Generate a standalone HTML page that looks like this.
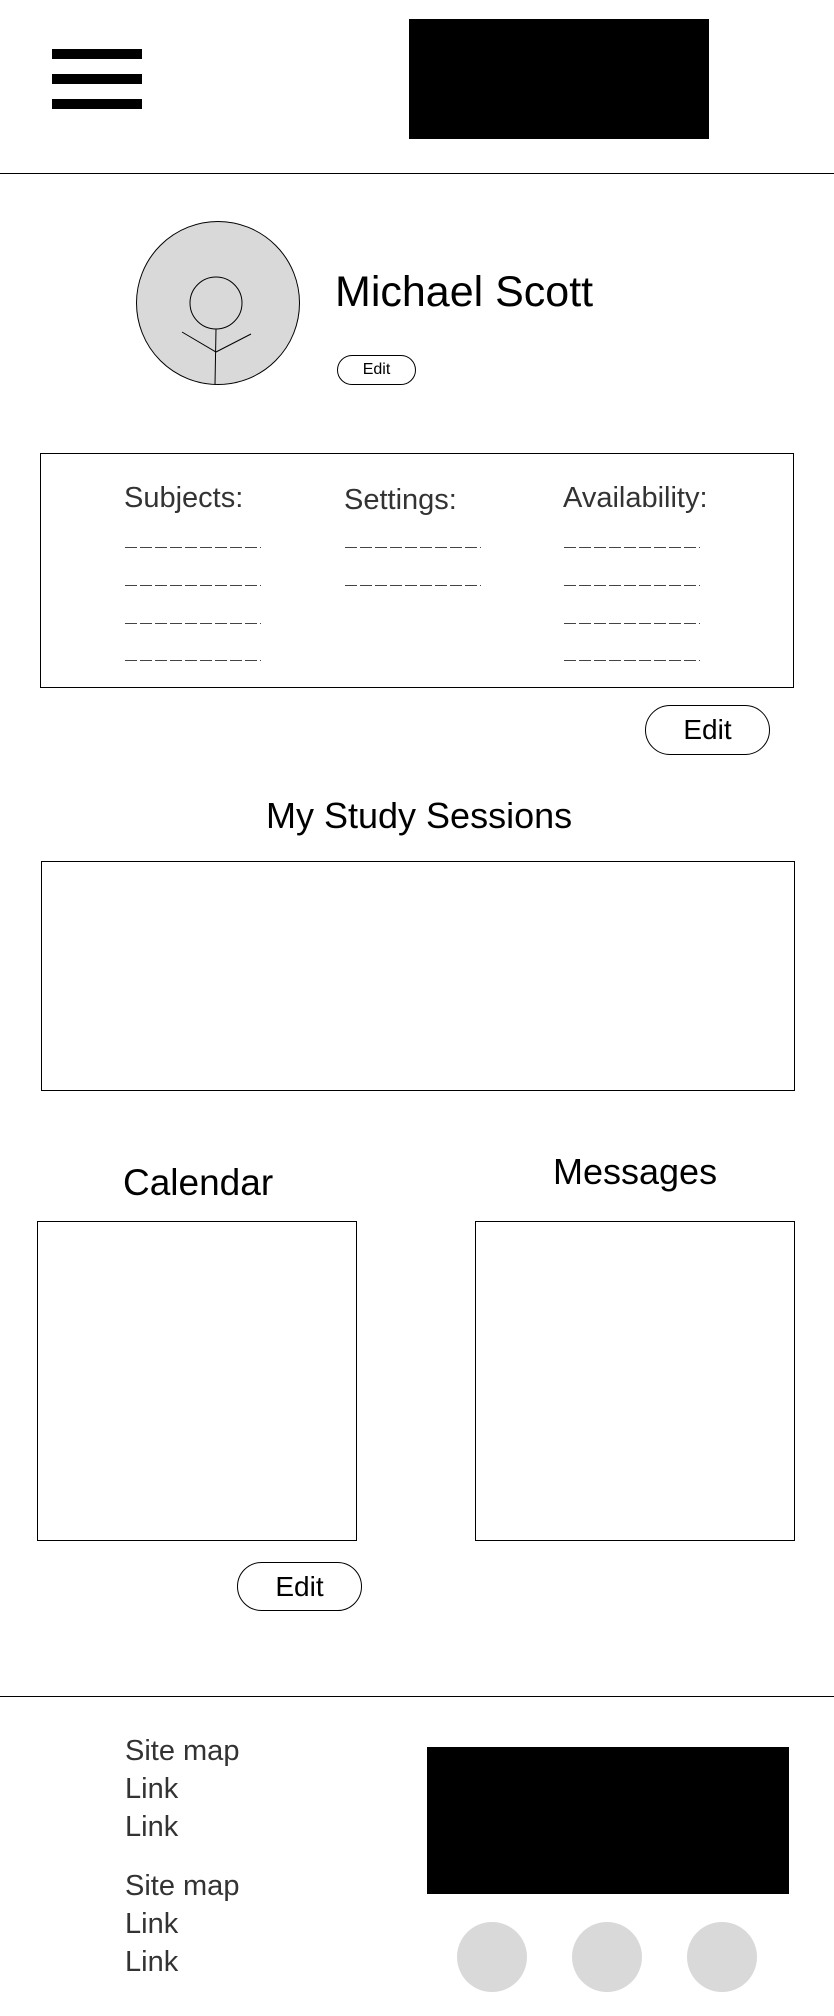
<!DOCTYPE html>
<html><head><meta charset="utf-8"><style>
*{margin:0;padding:0;box-sizing:border-box}
body{width:834px;height:2016px;position:relative;background:#fff;font-family:"Liberation Sans",sans-serif;color:#000;overflow:hidden}
.a{position:absolute}
.bar{position:absolute;left:52px;width:90px;height:10px;background:#000}
.box{position:absolute;border:1px solid #000}
.t{position:absolute;white-space:nowrap;line-height:1}
.btn{position:absolute;border:1px solid #000;border-radius:30px;display:flex;align-items:center;justify-content:center}
.lt{color:#333;font-weight:normal}
.d{position:absolute;width:136px;height:1px;background:repeating-linear-gradient(90deg,#444 0 12px,transparent 12px 15px)}
.c{position:absolute;width:70px;height:70px;border-radius:50%;background:#d9d9d9;top:1922px}
</style></head><body>
<div class="bar" style="top:49px"></div>
<div class="bar" style="top:74px"></div>
<div class="bar" style="top:99px"></div>
<div class="a" style="left:409px;top:19px;width:300px;height:120px;background:#000"></div>
<div class="a" style="left:0;top:173px;width:834px;height:1px;background:#000"></div>

<svg class="a" style="left:0;top:0" width="834" height="400">
<circle cx="218" cy="303" r="81.5" fill="#d9d9d9" stroke="#000" stroke-width="1"/>
<circle cx="216" cy="303" r="26" fill="none" stroke="#000" stroke-width="1"/>
<path d="M216 329 L215 385 M182 332 L216 352 L251 334" fill="none" stroke="#000" stroke-width="1"/>
</svg>
<div class="t" style="left:335px;top:271px;font-size:43px;letter-spacing:0px">Michael Scott</div>
<div class="btn" style="left:337px;top:355px;width:79px;height:30px;font-size:16px">Edit</div>

<div class="box" style="left:40px;top:453px;width:754px;height:235px"></div>
<div class="t lt" style="left:124px;top:484px;font-size:29px">Subjects:</div>
<div class="t lt" style="left:344px;top:486px;font-size:29px">Settings:</div>
<div class="t lt" style="left:563px;top:484px;font-size:29px">Availability:</div>
<div class="d" style="left:125px;top:547px"></div>
<div class="d" style="left:125px;top:585px"></div>
<div class="d" style="left:125px;top:623px"></div>
<div class="d" style="left:125px;top:660px"></div>
<div class="d" style="left:345px;top:547px"></div>
<div class="d" style="left:345px;top:585px"></div>
<div class="d" style="left:564px;top:547px"></div>
<div class="d" style="left:564px;top:585px"></div>
<div class="d" style="left:564px;top:623px"></div>
<div class="d" style="left:564px;top:660px"></div>
<div class="btn" style="left:645px;top:705px;width:125px;height:50px;font-size:28px">Edit</div>

<div class="t" style="left:266px;top:798px;font-size:36px;letter-spacing:0px">My Study Sessions</div>
<div class="box" style="left:41px;top:861px;width:754px;height:230px"></div>

<div class="t" style="left:123px;top:1164px;font-size:37px">Calendar</div>
<div class="t" style="left:553px;top:1154px;font-size:36px">Messages</div>
<div class="box" style="left:37px;top:1221px;width:320px;height:320px"></div>
<div class="box" style="left:475px;top:1221px;width:320px;height:320px"></div>
<div class="btn" style="left:237px;top:1562px;width:125px;height:49px;font-size:28px">Edit</div>

<div class="a" style="left:0;top:1696px;width:834px;height:1px;background:#000"></div>
<div class="t lt" style="left:125px;top:1732px;font-size:29px;line-height:38px">Site map<br>Link<br>Link</div>
<div class="t lt" style="left:125px;top:1867px;font-size:29px;line-height:38px">Site map<br>Link<br>Link</div>
<div class="a" style="left:427px;top:1747px;width:362px;height:147px;background:#000"></div>
<div class="c" style="left:457px"></div>
<div class="c" style="left:572px"></div>
<div class="c" style="left:687px"></div>
</body></html>
